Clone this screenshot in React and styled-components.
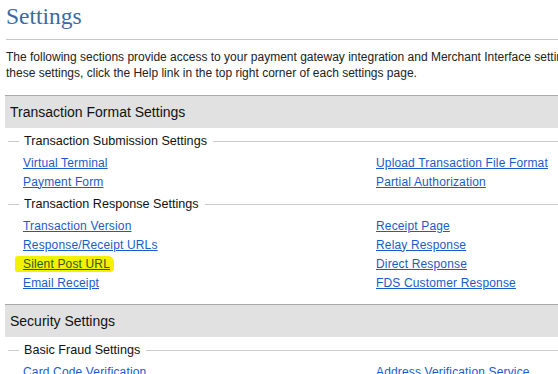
import React from 'react'
import styled, { createGlobalStyle } from 'styled-components'

const GlobalStyle = createGlobalStyle`
  html, body {
    margin: 0;
    padding: 0;
    background: #fff;
    overflow: hidden;
  }
  body {
    font-family: 'Liberation Sans', Arial, sans-serif;
    color: #222;
  }
`

const Page = styled.div`
  width: 760px;
`

const Title = styled.h1`
  margin: 0 0 0 6px;
  padding-top: 2px;
  font-family: 'Liberation Serif', 'Times New Roman', serif;
  font-weight: 400;
  font-size: 23.5px;
  line-height: 28px;
  color: #3b6aa3;
`

const Rule = styled.hr`
  margin: 9px 0 0 6px;
  border: 0;
  border-top: 1px solid #c8c8c8;
`

const Intro = styled.p`
  margin: 9px 0 0 6px;
  font-size: 12px;
  line-height: 16px;
  color: #222;
`

const Section = styled.section`
  margin-top: ${(p) => p.$top}px;
  padding-bottom: 12px;
`

const Band = styled.h2`
  margin: 0 0 0 5px;
  height: 32px;
  padding-left: 5px;
  background: #e1e1e1;
  border-top: 1px solid #a9a9a9;
  font-size: 14px;
  font-weight: 400;
  line-height: 32px;
  color: #111;
`

const Legend = styled.div`
  display: flex;
  align-items: center;
  gap: 5px;
  height: 20px;
  margin: 3px 0 0 8px;
  font-size: 12.6px;
  color: #111;

  &::before,
  &::after {
    content: '';
    height: 1px;
    background: #cccccc;
  }

  &::before {
    width: 11px;
  }

  &::after {
    flex: 1;
    margin-left: 1px;
  }
`

const LinkGrid = styled.div`
  display: grid;
  grid-template-columns: 353px 1fr;
  grid-auto-rows: 19px;
  margin: 2px 0 0 23px;
  font-size: 12px;
  letter-spacing: 0.15px;
`

const Cell = styled.div`
  display: flex;
  align-items: center;
`

const SettingLink = styled.a`
  color: #1b5bc9;
  text-decoration: underline;
  cursor: pointer;

  &.marked {
    display: inline-block;
    margin-left: -8px;
    padding: 1px 4px 1px 8px;
    background: #f2f200;
    color: #2f5a1c;
    border-radius: 3px 6px 4px 2px;
  }
`

const sections = [
  {
    title: 'Transaction Format Settings',
    top: 14,
    groups: [
      {
        name: 'Transaction Submission Settings',
        left: ['Virtual Terminal', 'Payment Form'],
        right: ['Upload Transaction File Format', 'Partial Authorization'],
      },
      {
        name: 'Transaction Response Settings',
        left: [
          'Transaction Version',
          'Response/Receipt URLs',
          'Silent Post URL',
          'Email Receipt',
        ],
        right: [
          'Receipt Page',
          'Relay Response',
          'Direct Response',
          'FDS Customer Response',
        ],
      },
    ],
  },
  {
    title: 'Security Settings',
    top: 0,
    groups: [
      {
        name: 'Basic Fraud Settings',
        left: ['Card Code Verification'],
        right: ['Address Verification Service'],
      },
    ],
  },
]

const Group = ({ name, left, right }) => {
  const rows = Math.max(left.length, right.length)
  const cells = []
  for (let i = 0; i < rows; i++) {
    cells.push(
      <Cell key={`l${i}`}>
        {left[i] && (
          <SettingLink className={left[i] === 'Silent Post URL' ? 'marked' : ''}>
            {left[i]}
          </SettingLink>
        )}
      </Cell>
    )
    cells.push(
      <Cell key={`r${i}`}>{right[i] && <SettingLink>{right[i]}</SettingLink>}</Cell>
    )
  }
  return (
    <>
      <Legend>{name}</Legend>
      <LinkGrid>{cells}</LinkGrid>
    </>
  )
}

const App = () => (
  <Page>
    <GlobalStyle />
    <Title>Settings</Title>
    <Rule />
    <Intro>
      The following sections provide access to your payment gateway integration and Merchant
      Interface settings. For more information about
      <br />
      these settings, click the Help link in the top right corner of each settings page.
    </Intro>
    {sections.map((s) => (
      <Section key={s.title} $top={s.top}>
        <Band>{s.title}</Band>
        {s.groups.map((g) => (
          <Group key={g.name} {...g} />
        ))}
      </Section>
    ))}
  </Page>
)

export default App
